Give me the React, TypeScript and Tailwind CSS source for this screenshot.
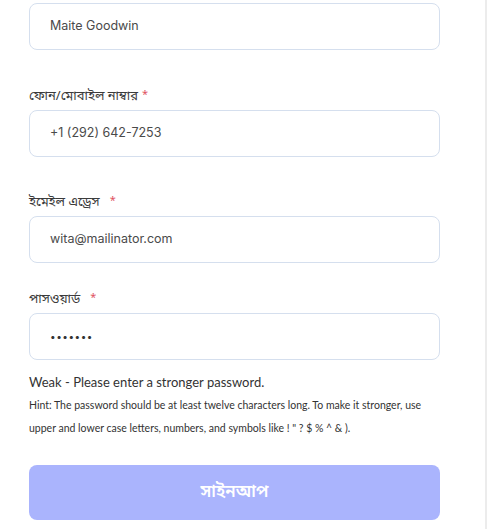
import React from "react";

const bn = { fontFamily: '"Noto Sans Bengali", "Noto Sans", "Liberation Sans", sans-serif' };

function Label({ text, gap }: { text: string; gap: string }) {
  return (
    <div className="flex items-start h-5 text-[13px] leading-5 text-[#3b3b3b]" style={bn}>
      <span>{text}</span>
      <span className={`${gap} text-[#e0525f] text-[11px] leading-4`}>*</span>
    </div>
  );
}

function Field({ value, dots }: { value: string; dots?: boolean }) {
  return (
    <div className="h-[47px] w-full rounded-lg border border-[#d5dfee] bg-white flex items-center px-5">
      {dots ? (
        <span className="font-['Inter',sans-serif] text-[10px] tracking-[0.5px] text-[#333]">{value}</span>
      ) : (
        <span className="font-['Inter',sans-serif] text-[12.5px] text-[#4a4a4a]">{value}</span>
      )}
    </div>
  );
}

export default function App() {
  return (
    <div className="w-[487px] h-[529px] bg-white overflow-hidden flex">
      <div className="w-[485px] pl-[29px] pr-[45px] pt-[3px]">
        <Field value="Maite Goodwin" />

        <div className="mt-[37px] mb-[3px]">
          <Label text="ফোন/মোবাইল নাম্বার" gap="ml-1" />
        </div>
        <Field value="+1 (292) 642-7253" />

        <div className="mt-[36px] mb-[3px]">
          <Label text="ইমেইল এড্রেস" gap="ml-[10px]" />
        </div>
        <Field value="wita@mailinator.com" />

        <div className="mt-[27px] mb-[3px]">
          <Label text="পাসওয়ার্ড" gap="ml-[10px]" />
        </div>
        <Field value="•••••••" dots />

        <p className="mt-[12px] text-[13px] leading-5 text-[#333] font-['Lato',sans-serif]">
          Weak - Please enter a stronger password.
        </p>
        <p className="mt-[2px] text-[10.5px] leading-[23px] text-[#333] font-['Lato',sans-serif]">
          Hint: The password should be at least twelve characters long. To make it stronger, use
          upper and lower case letters, numbers, and symbols like ! " ? $ % ^ &amp; ).
        </p>

        <button
          className="mt-[25px] w-full h-[55px] rounded-lg bg-[#aab4fd] text-white text-[17px] font-semibold flex items-center justify-center"
          style={bn}
        >
          সাইনআপ
        </button>
      </div>
      <div className="w-[2px] h-full bg-[#ececec]" />
    </div>
  );
}
